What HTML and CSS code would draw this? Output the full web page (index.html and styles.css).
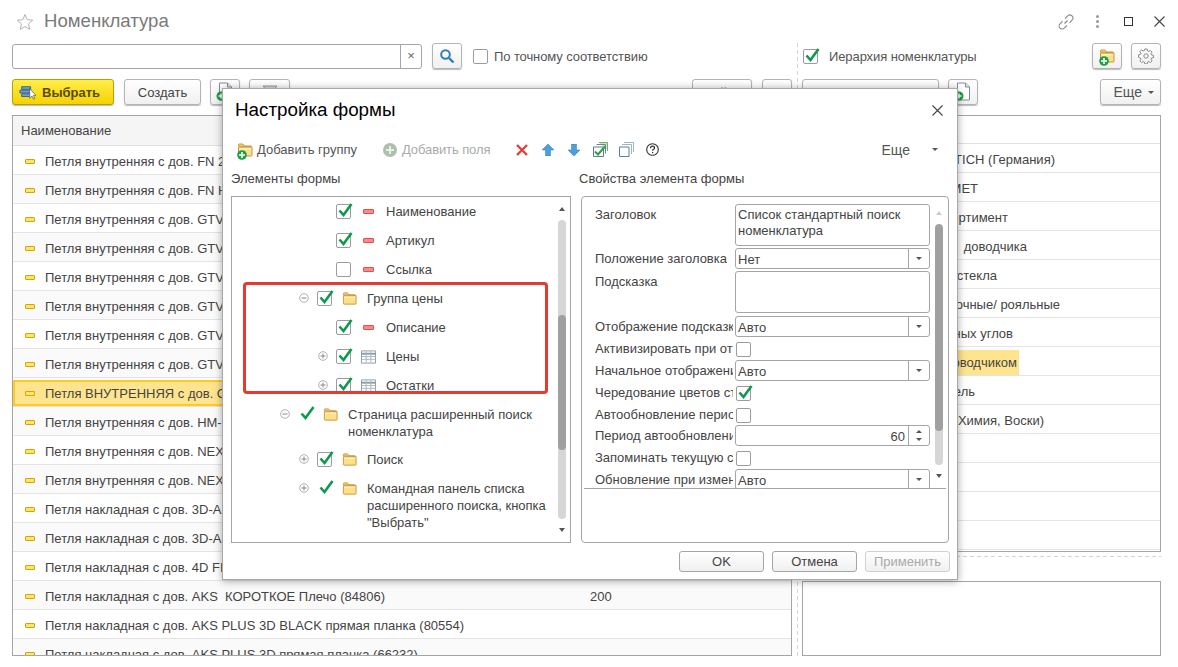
FILE: index.html
```html
<!DOCTYPE html>
<html lang="ru">

<head>
  <meta charset="UTF-8">
  <meta name="viewport" content="width=device-width, initial-scale=1.0">
  <title>Номенклатура</title>
  <link rel="stylesheet" href="styles.css">
</head>

<body>
  <svg class="sprites" width="0" height="0">
    <symbol id="i-tick" viewBox="0 0 16 16">
      <path d="M2.5 8.5 6.5 13 14.5 2" fill="none" stroke="#0b9a4b" stroke-width="2.6" />
    </symbol>
    <symbol id="i-folder" viewBox="0 0 16 16">
      <path d="M1.5 4V2.8q0-.8.8-.8h3.6l1.4 2h6.4q.8 0 .8.8V5z" fill="#f7d98a" stroke="#c9963a" />
      <path d="M1.5 5h13.5v8.2q0 .8-.8.8H2.3q-.8 0-.8-.8z" fill="#fbe08c" stroke="#c9963a" />
      <path d="M2.5 6h11.500v1.500H2.500z" fill="#fff2c0" />
    </symbol>
    <symbol id="i-plus" viewBox="0 0 10 10">
      <circle cx="5" cy="5" r="4.800" fill="#1e9e45" />
      <path d="M5 2v6M2 5h6" stroke="#fff" stroke-width="1.600" />
    </symbol>
    <symbol id="i-doc" viewBox="0 0 18 20">
      <path d="M3.500 1h8l4 4v13h-12z" fill="#fff" stroke="#7f8c97" />
      <path d="M11.500 1v4h4" fill="#dfe6ea" stroke="#7f8c97" />
      <circle cx="5" cy="14" r="4.500" fill="#1e9e45" />
      <path d="M5 11.500v5M2.500 14h5" stroke="#fff" stroke-width="1.500" />
    </symbol>
    <symbol id="i-table" viewBox="0 0 16 14">
      <path d="M.5.500h15v13H.5z" fill="#fff" stroke="#8b99a5" />
      <path d="M.5 3.500h15" stroke="#8b99a5" stroke-width="2" />
      <path d="M5.500 1v12M10.500 1v12M1 6.500h14M1 9.500h14" stroke="#aab5be" />
    </symbol>
    <symbol id="i-minus-round" viewBox="0 0 10 10">
      <circle cx="5" cy="5" r="4.300" fill="#fff" stroke="#b0b0b0" />
      <path d="M2.500 5h5" stroke="#888" />
    </symbol>
    <symbol id="i-plus-round" viewBox="0 0 10 10">
      <circle cx="5" cy="5" r="4.300" fill="#fff" stroke="#b0b0b0" />
      <path d="M2.500 5h5M5 2.500v5" stroke="#888" />
    </symbol>
  </svg>

  <div class="form-window">
    <header class="titlebar">
      <svg class="star" width="18" height="18" viewBox="0 0 18 18">
        <path d="M9 1.500 11.200 6.700 16.800 7.200 12.500 10.900 13.800 16.400 9 13.500 4.200 16.400 5.500 10.900 1.200 7.200 6.800 6.700z" fill="none" stroke="#b4b4b4" />
      </svg>
      <h1 class="titlebar__name">Номенклатура</h1>
      <div class="titlebar__actions">
        <svg width="16" height="16" viewBox="0 0 16 16">
          <path d="M6.500 9.500 9.500 6.500M7 4.500 9.700 1.900a3 3 0 0 1 4.300 4.300L11.500 8.800M9 11.500 6.300 14.100A3 3 0 0 1 2 9.800L4.500 7.200" fill="none" stroke="#8a8a8a" stroke-width="1.100" />
        </svg>
        <span class="dots"><i></i><i></i><i></i></span>
        <span class="win-max"></span>
        <svg width="11" height="11" viewBox="0 0 11 11">
          <path d="M.5.500l10 10M10.500.500l-10 10" stroke="#444" stroke-width="1.100" />
        </svg>
      </div>
    </header>

    <div class="panes">
      <section class="pane pane--list">
        <div class="filter-row">
          <div class="search-box">
            <span class="search-box__input"></span>
            <span class="search-box__clear">×</span>
          </div>
          <button class="btn btn--icon">
            <svg width="16" height="16" viewBox="0 0 16 16">
              <circle cx="6.500" cy="6.500" r="4.300" fill="none" stroke="#2f7fb5" stroke-width="2" />
              <path d="M10 10l4.500 4.500" stroke="#2f7fb5" stroke-width="2.400" />
            </svg>
          </button>
          <label class="check-label"><span class="check"></span>По точному соответствию</label>
        </div>

        <div class="tool-row">
          <button class="btn btn--primary">
            <svg width="17" height="17" viewBox="0 0 19 17">
              <path d="M3 2h10v3H3zM1 6h12v3H1zM3 10h10v3H3z" fill="#6d9fd0" stroke="#2f5c8c" />
              <path d="M12 4v11l2.500-2.500 1.800 3.500 1.500-.8-1.800-3.400H19z" fill="#fff" stroke="#444" stroke-width=".7" />
            </svg>
            Выбрать
          </button>
          <button class="btn btn--create">Создать</button>
          <button class="btn btn--icon"><svg width="18" height="20"><use href="#i-doc" /></svg></button>
          <button class="btn btn--filter">
            <svg width="16" height="14" viewBox="0 0 16 14">
              <path d="M1 1h14L10 7v6H6V7z" fill="#d7d7d7" stroke="#9a9a9a" />
            </svg>
          </button>
          <span class="tool-row__gap"></span>
          <button class="btn btn--find">Найти</button>
          <button class="btn btn--icon"></button>
        </div>

        <div class="grid">
          <div class="grid__head">Наименование</div>
          <div class="grid__row"><i class="mark"></i>Петля внутренняя с дов. FN 2D прямая планка</div>
          <div class="grid__row"><i class="mark"></i>Петля внутренняя с дов. FN HM прямая планка</div>
          <div class="grid__row"><i class="mark"></i>Петля внутренняя с дов. GTV 3D прямая планка</div>
          <div class="grid__row"><i class="mark"></i>Петля внутренняя с дов. GTV 2D прямая планка</div>
          <div class="grid__row"><i class="mark"></i>Петля внутренняя с дов. GTV 4D прямая планка</div>
          <div class="grid__row"><i class="mark"></i>Петля внутренняя с дов. GTV BLACK прямая планка</div>
          <div class="grid__row"><i class="mark"></i>Петля внутренняя с дов. GTV KOROTKOE прямая планка</div>
          <div class="grid__row"><i class="mark"></i>Петля внутренняя с дов. GTV PLUS прямая планка</div>
          <div class="grid__row is-current"><i class="mark"></i>Петля ВНУТРЕННЯЯ с дов. GTV прямая планка</div>
          <div class="grid__row"><i class="mark"></i>Петля внутренняя с дов. HM-3D прямая планка</div>
          <div class="grid__row"><i class="mark"></i>Петля внутренняя с дов. NEXIS прямая планка</div>
          <div class="grid__row"><i class="mark"></i>Петля внутренняя с дов. NEXIS BLACK прямая планка</div>
          <div class="grid__row"><i class="mark"></i>Петля накладная с дов. 3D-A прямая планка</div>
          <div class="grid__row"><i class="mark"></i>Петля накладная с дов. 3D-A BLACK прямая планка</div>
          <div class="grid__row"><i class="mark"></i>Петля накладная с дов. 4D FIX прямая планка</div>
          <div class="grid__row"><i class="mark"></i>Петля накладная с дов. AKS&nbsp; КОРОТКОЕ Плечо (84806)<span class="grid__qty">200</span></div>
          <div class="grid__row"><i class="mark"></i>Петля накладная с дов. AKS PLUS 3D BLACK прямая планка (80554)</div>
          <div class="grid__row"><i class="mark"></i>Петля накладная с дов. AKS PLUS 3D прямая планка (66232)</div>
        </div>
      </section>

      <div class="splitter"></div>

      <section class="pane pane--groups">
        <div class="filter-row">
          <label class="check-label check-label--hier">
            <span class="check"><svg class="tick" width="16" height="16"><use href="#i-tick" /></svg></span>
            Иерархия номенклатуры
          </label>
          <span class="tool-row__gap"></span>
          <button class="btn btn--icon">
            <span class="icon-stack">
              <svg width="16" height="16"><use href="#i-folder" /></svg>
              <svg class="icon-stack__plus" width="10" height="10"><use href="#i-plus" /></svg>
            </span>
          </button>
          <button class="btn btn--icon btn--gear">
            <svg width="16" height="16" viewBox="0 0 16 16">
              <path d="M6.800 1h2.400l.3 1.900 1.300.6 1.600-1.100 1.700 1.700-1.100 1.600.6 1.300 1.900.3v2.400l-1.900.3-.6 1.300 1.100 1.600-1.700 1.700-1.600-1.100-1.300.6-.3 1.900H6.800l-.3-1.900-1.300-.6-1.600 1.100-1.700-1.700 1.100-1.600-.6-1.300L.5 9.200V6.800l1.900-.3.6-1.300-1.100-1.600 1.700-1.700 1.600 1.100 1.300-.6z" fill="none" stroke="#8a8a8a" />
              <circle cx="8" cy="8" r="2.200" fill="none" stroke="#8a8a8a" />
            </svg>
          </button>
        </div>

        <div class="tool-row">
          <button class="btn btn--group">Создать группу</button>
          <button class="btn btn--icon"><svg width="18" height="20"><use href="#i-doc" /></svg></button>
          <span class="tool-row__gap"></span>
          <button class="btn btn--more">Еще<i class="caret"></i></button>
        </div>

        <div class="groups">
          <div class="groups__head">Номенклатура</div>
          <div class="groups__row end-1055">Фурнитура HETTICH (Германия)</div>
          <div class="groups__row end-978">Фурнитура МЕТ</div>
          <div class="groups__row end-1008">Фурнитура ассортимент</div>
          <div class="groups__row end-1027">Петли без&nbsp;&nbsp;доводчика</div>
          <div class="groups__row end-997">Петли для стекла</div>
          <div class="groups__row end-1060">Петли угловочные/ рояльные</div>
          <div class="groups__row end-1013">Петли для нестандартных углов</div>
          <div class="groups__row end-1019"><span class="groups__current">Петли с доводчиком</span></div>
          <div class="groups__row end-975">Петли и мебель</div>
          <div class="groups__row end-1044">Прочее (Химия, Воски)</div>
          <div class="groups__row"></div>
          <div class="groups__row"></div>
          <div class="groups__row"></div>
          <div class="groups__row"></div>
        </div>

        <div class="h-split"></div>
        <div class="preview"></div>
      </section>
    </div>
  </div>

  <!-- окно настройки поверх формы -->
  <div class="dialog">
    <div class="dialog__title">
      Настройка формы
      <svg width="11" height="11" viewBox="0 0 11 11">
        <path d="M.5.500l10 10M10.500.500l-10 10" stroke="#444" stroke-width="1.100" />
      </svg>
    </div>

    <div class="dialog__tools">
      <span class="tool tool--group">
        <span class="icon-stack">
          <svg width="16" height="16"><use href="#i-folder" /></svg>
          <svg class="icon-stack__plus" width="10" height="10"><use href="#i-plus" /></svg>
        </span>
        Добавить группу
      </span>
      <span class="tool tool--off">
        <svg width="14" height="14" viewBox="0 0 14 14">
          <circle cx="7" cy="7" r="7" fill="#aebfae" />
          <path d="M7 3v8M3 7h8" stroke="#e8eee8" stroke-width="2" />
        </svg>
        Добавить поля
      </span>
      <svg class="tool-ico tool-ico--del" width="12" height="12" viewBox="0 0 12 12">
        <path d="M1 1l10 10M11 1 1 11" stroke="#e2403a" stroke-width="2.400" />
      </svg>
      <svg class="tool-ico tool-ico--arrow" width="12" height="12" viewBox="0 0 12 12">
        <path d="M6 0l6 6H8.500v6h-5V6H0z" fill="#4a9fdc" stroke="#2f7fb5" stroke-width=".5" />
      </svg>
      <svg class="tool-ico tool-ico--arrow" width="12" height="12" viewBox="0 0 12 12">
        <path d="M6 12 0 6h3.500V0h5v6H12z" fill="#4a9fdc" stroke="#2f7fb5" stroke-width=".5" />
      </svg>
      <svg class="tool-ico tool-ico--copy" width="15" height="15" viewBox="0 0 15 15">
        <path d="M6 .500h8.500V9" fill="#cfe3cf" stroke="#7fa37f" />
        <path d="M3.500 2.500h9v9" fill="none" stroke="#5f8f7f" />
        <path d="M.5 5h10v9.500H.5z" fill="#fff" stroke="#5c7f99" />
        <path d="M2 9.500l3 3 7-8" fill="none" stroke="#2f9e3f" stroke-width="2" />
      </svg>
      <svg class="tool-ico tool-ico--copy2" width="15" height="15" viewBox="0 0 15 15">
        <path d="M5 .500h9.500V10M3 2.500h9.500V12" fill="none" stroke="#9fb3c2" />
        <path d="M.5 5h9.500v9.500H.5z" fill="#fff" stroke="#5c7f99" />
      </svg>
      <svg class="tool-ico" width="13" height="13" viewBox="0 0 13 13">
        <circle cx="6.500" cy="6.500" r="5.800" fill="none" stroke="#333" stroke-width="1.100" />
        <path d="M4.500 5.200q0-2 2-2t2 1.700q0 1-1.200 1.600-.8.500-.8 1.300" fill="none" stroke="#333" stroke-width="1.200" />
        <path d="M6 9h1.200v1.200H6z" fill="#333" />
      </svg>
      <span class="tool-row__gap"></span>
      <span class="tool tool--more">Еще<i class="caret"></i></span>
    </div>

    <div class="dialog__columns">
      <div class="dialog__col dialog__col--tree">
        <div class="dialog__caption">Элементы формы</div>
        <div class="tree">
          <div class="tree__list">
            <div class="tree-row lvl-3">
              <span class="expander"></span>
              <span class="check"><svg class="tick" width="16" height="16"><use href="#i-tick" /></svg></span>
              <span class="tree-row__ico"><i class="dash"></i></span>
              <span>Наименование</span>
            </div>
            <div class="tree-row lvl-3">
              <span class="expander"></span>
              <span class="check"><svg class="tick" width="16" height="16"><use href="#i-tick" /></svg></span>
              <span class="tree-row__ico"><i class="dash"></i></span>
              <span>Артикул</span>
            </div>
            <div class="tree-row lvl-3">
              <span class="expander"></span>
              <span class="check"></span>
              <span class="tree-row__ico"><i class="dash"></i></span>
              <span>Ссылка</span>
            </div>
            <div class="tree-row lvl-2">
              <svg class="expander" width="10" height="10"><use href="#i-minus-round" /></svg>
              <span class="check"><svg class="tick" width="16" height="16"><use href="#i-tick" /></svg></span>
              <span class="tree-row__ico"><svg width="15" height="15"><use href="#i-folder" /></svg></span>
              <span>Группа цены</span>
            </div>
            <div class="tree-row lvl-3">
              <span class="expander"></span>
              <span class="check"><svg class="tick" width="16" height="16"><use href="#i-tick" /></svg></span>
              <span class="tree-row__ico"><i class="dash"></i></span>
              <span>Описание</span>
            </div>
            <div class="tree-row lvl-3">
              <svg class="expander" width="10" height="10"><use href="#i-plus-round" /></svg>
              <span class="check"><svg class="tick" width="16" height="16"><use href="#i-tick" /></svg></span>
              <span class="tree-row__ico"><svg width="15" height="14"><use href="#i-table" /></svg></span>
              <span>Цены</span>
            </div>
            <div class="tree-row lvl-3">
              <svg class="expander" width="10" height="10"><use href="#i-plus-round" /></svg>
              <span class="check"><svg class="tick" width="16" height="16"><use href="#i-tick" /></svg></span>
              <span class="tree-row__ico"><svg width="15" height="14"><use href="#i-table" /></svg></span>
              <span>Остатки</span>
            </div>
            <div class="tree-row tree-row--wrap lvl-1">
              <svg class="expander" width="10" height="10"><use href="#i-minus-round" /></svg>
              <span class="check check--bare"><svg class="tick" width="16" height="16"><use href="#i-tick" /></svg></span>
              <span class="tree-row__ico"><svg width="15" height="15"><use href="#i-folder" /></svg></span>
              <span>Страница расширенный поиск<br>номенклатура</span>
            </div>
            <div class="tree-row lvl-2">
              <svg class="expander" width="10" height="10"><use href="#i-plus-round" /></svg>
              <span class="check"><svg class="tick" width="16" height="16"><use href="#i-tick" /></svg></span>
              <span class="tree-row__ico"><svg width="15" height="15"><use href="#i-folder" /></svg></span>
              <span>Поиск</span>
            </div>
            <div class="tree-row lvl-2">
              <svg class="expander" width="10" height="10"><use href="#i-plus-round" /></svg>
              <span class="check check--bare"><svg class="tick" width="16" height="16"><use href="#i-tick" /></svg></span>
              <span class="tree-row__ico"><svg width="15" height="15"><use href="#i-folder" /></svg></span>
              <span>Командная панель списка<br>расширенного поиска, кнопка<br>"Выбрать"</span>
            </div>
            <div class="tree-row lvl-2">
              <span class="expander"></span>
              <span class="check check--bare"><svg class="tick" width="16" height="16"><use href="#i-tick" /></svg></span>
            </div>
          </div>
          <div class="scroll scroll--tree">
            <i class="scroll__up"></i>
            <div class="scroll__track"><div class="scroll__thumb"></div></div>
            <i class="scroll__down"></i>
          </div>
        </div>
      </div>

      <div class="dialog__col dialog__col--props">
        <div class="dialog__caption">Свойства элемента формы</div>
        <div class="props">
          <div class="props__sheet">
            <div class="props__rows">
              <div class="prop prop--tall">
                <span class="prop__label">Заголовок</span>
                <span class="memo">Список стандартный поиск номенклатура</span>
              </div>
              <div class="prop prop--select">
                <span class="prop__label">Положение заголовка</span>
                <span class="field">Нет<i class="field__btn"><i class="caret"></i></i></span>
              </div>
              <div class="prop prop--tall">
                <span class="prop__label">Подсказка</span>
                <span class="memo"></span>
              </div>
              <div class="prop">
                <span class="prop__label">Отображение подсказки</span>
                <span class="field">Авто<i class="field__btn"><i class="caret"></i></i></span>
              </div>
              <div class="prop">
                <span class="prop__label">Активизировать при открытии</span>
                <span class="check"></span>
              </div>
              <div class="prop">
                <span class="prop__label">Начальное отображение</span>
                <span class="field">Авто<i class="field__btn"><i class="caret"></i></i></span>
              </div>
              <div class="prop">
                <span class="prop__label">Чередование цветов строк</span>
                <span class="check"><svg class="tick" width="16" height="16"><use href="#i-tick" /></svg></span>
              </div>
              <div class="prop prop--short">
                <span class="prop__label">Автообновление периодически</span>
                <span class="check"></span>
              </div>
              <div class="prop">
                <span class="prop__label">Период автообновления</span>
                <span class="field field--num">60<i class="field__spin"><i class="caret caret--up"></i><i class="caret"></i></i></span>
              </div>
              <div class="prop">
                <span class="prop__label">Запоминать текущую строку</span>
                <span class="check"></span>
              </div>
              <div class="prop">
                <span class="prop__label">Обновление при изменении</span>
                <span class="field">Авто<i class="field__btn"><i class="caret"></i></i></span>
              </div>
            </div>
            <div class="scroll scroll--props">
              <i class="scroll__up scroll__up--off"></i>
              <div class="scroll__track"><div class="scroll__thumb"></div></div>
              <i class="scroll__down"></i>
            </div>
          </div>
        </div>
      </div>
    </div>

    <div class="dialog__footer">
      <button class="btn btn--foot">OK</button>
      <button class="btn btn--foot">Отмена</button>
      <button class="btn btn--foot btn--off">Применить</button>
    </div>

    <div class="highlight"></div>
  </div>
</body>

</html>
```

FILE: styles.css
```css
* {
  box-sizing: border-box;
}

body {
  margin: 0;
  width: 1178px;
  height: 667px;
  overflow: hidden;
  position: relative;
  background: #fff;
  font-family: "Liberation Sans", Arial, sans-serif;
  font-size: 13px;
  color: #444;
}

.sprites {
  position: absolute;
}

.form-window {
  padding: 0 17px 0 12px;
}

/* title */
.titlebar {
  height: 43px;
  display: flex;
  align-items: center;
}

.star {
  margin: 0 10px 0 4px;
}

.titlebar__name {
  margin: 0 0 2px;
  font-size: 18.6px;
  font-weight: 400;
  color: #7a7a7a;
}

.titlebar__actions {
  margin-left: auto;
  margin-right: -4px;
  display: flex;
  align-items: center;
}

.dots {
  display: flex;
  flex-direction: column;
  gap: 2px;
  margin: 0 25px 0 22px;
}

.dots i {
  width: 3px;
  height: 3px;
  background: #999;
  border-radius: 50%;
}

.win-max {
  width: 9px;
  height: 9px;
  border: 1px solid #333;
  margin-right: 21px;
}

/* panes */
.panes {
  display: flex;
}

.pane--list {
  width: 780px;
}

.pane--groups {
  width: 359px;
}

.splitter {
  width: 10px;
  height: 613px;
  background: repeating-linear-gradient(#d4d4d4 0 4px, transparent 4px 7px) 5px 0 / 1px 100% no-repeat;
}

.filter-row {
  height: 26px;
  display: flex;
  align-items: center;
  margin-bottom: 10px;
}

.tool-row {
  height: 26px;
  display: flex;
  align-items: center;
  margin-bottom: 10px;
}

.tool-row__gap {
  flex: 1;
}

.search-box {
  width: 410px;
  height: 25px;
  display: flex;
  border: 1px solid #a5a5a5;
  border-radius: 3px;
  margin-right: 10px;
  background: #fff;
}

.search-box__input {
  flex: 1;
}

.search-box__clear {
  width: 21px;
  border-left: 1px solid #a5a5a5;
  text-align: center;
  line-height: 22px;
  font-size: 13px;
  color: #666;
}

/* buttons */
.btn {
  height: 26px;
  padding: 0;
  display: inline-flex;
  align-items: center;
  justify-content: center;
  font: inherit;
  color: #444;
  background: linear-gradient(#fff, #f0f0f0);
  border: 1px solid #b4b4b4;
  border-radius: 3px;
  box-shadow: 0 1px 1px #bbb;
}

.btn--icon {
  width: 30px;
}

.btn--primary {
  width: 102px;
  justify-content: flex-start;
  padding-left: 6px;
  gap: 6px;
  font-weight: 700;
  color: #5a4b00;
  background: linear-gradient(#ffee4a, #f6d200);
  border-color: #b8a000;
  margin-right: 10px;
}

.btn--create {
  width: 77px;
  margin-right: 9px;
}

.btn--filter {
  width: 41px;
  margin-left: 9px;
}

.btn--find {
  width: 60px;
  margin-right: 10px;
}

.btn--group {
  width: 137px;
  margin-right: 9px;
}

.btn--more {
  width: 61px;
  justify-content: flex-end;
  padding-right: 6px;
  gap: 6px;
  font-size: 14px;
  color: #555;
}

.btn--gear {
  margin-left: 9px;
}

.check-label {
  display: flex;
  align-items: center;
  gap: 6px;
  margin-left: 11px;
  color: #555;
  letter-spacing: -.1px;
}

.check-label--hier {
  margin-left: 1px;
  gap: 11px;
}

.check {
  width: 15px;
  height: 15px;
  flex: none;
  position: relative;
  display: inline-block;
  background: #fff;
  border: 1px solid #9c9c9c;
  border-radius: 2px;
}

.check--bare {
  border-color: transparent;
  background: none;
}

.tick {
  position: absolute;
  left: 0;
  top: -3px;
}

.caret {
  display: inline-block;
  width: 0;
  height: 0;
  border: 3px solid transparent;
  border-top: 3px solid #555;
  border-bottom: 0;
}

.caret--up {
  border-top: 0;
  border-bottom: 3px solid #555;
}

.icon-stack {
  position: relative;
  display: inline-flex;
}

.icon-stack__plus {
  position: absolute;
  left: 0;
  bottom: -2px;
}

/* main list */
.grid {
  height: 541px;
  overflow: hidden;
  border: 1px solid #a5a5a5;
}

.grid__head {
  height: 30px;
  padding-left: 8px;
  line-height: 30px;
  background: #f5f5f5;
  border-bottom: 1px solid #e0e0e0;
}

.grid__row {
  height: 29px;
  display: flex;
  align-items: center;
  white-space: pre;
  padding: 2px 0 0 12px;
  background: #fff;
  border-bottom: 1px solid #e4e4e4;
}

.grid__row:nth-child(odd) {
  background: #fafafa;
}

.grid__row.is-current {
  padding-top: 0;
  background: #fee48f;
  background-clip: padding-box;
  border-top: 2px solid transparent;
  box-shadow: inset 0 0 0 2px #ffcb20;
}

.mark {
  width: 10px;
  height: 5px;
  margin-right: 10px;
  background: #ffe566;
  border: 1px solid #cfa60c;
  border-radius: 1px;
}

.grid__qty {
  position: absolute;
  left: 590px;
}

/* right tree */
.groups {
  height: 437px;
  overflow: hidden;
  border: 1px solid #a5a5a5;
}

.groups__head {
  height: 28px;
  padding-left: 60px;
  line-height: 28px;
  border-bottom: 1px solid #e0e0e0;
}

.groups__row {
  height: 29px;
  display: flex;
  align-items: center;
  justify-content: flex-end;
  white-space: nowrap;
  padding-top: 2px;
  border-bottom: 1px solid #e4e4e4;
}

.end-975 { padding-right: 185px; }
.end-978 { padding-right: 182px; }
.end-997 { padding-right: 163px; }
.end-1008 { padding-right: 152px; }
.end-1013 { padding-right: 147px; }
.end-1019 { padding-right: 141px; }
.end-1027 { padding-right: 133px; }
.end-1044 { padding-right: 116px; }
.end-1055 { padding-right: 105px; }
.end-1060 { padding-right: 100px; }

.groups__current {
  background: #fee48f;
  padding: 5px 2px 5px 0;
}

.h-split {
  height: 29px;
  background: repeating-linear-gradient(90deg, #d4d4d4 0 4px, transparent 4px 7px) 0 4px / 100% 1px no-repeat;
}

.preview {
  height: 75px;
  border: 1px solid #a5a5a5;
}

/* dialog */
.dialog {
  position: absolute;
  left: 222px;
  top: 88px;
  width: 736px;
  height: 492px;
  background: #fff;
  border: 1px solid #a8a8a8;
  box-shadow: 0 1px 8px rgba(0, 0, 0, .35);
}

.dialog__title {
  height: 42px;
  padding: 0 14px 0 12px;
  display: flex;
  align-items: center;
  justify-content: space-between;
  font-size: 18.8px;
  color: #000;
}

.dialog__tools {
  height: 37px;
  padding: 0 19px 0 14px;
  display: flex;
  align-items: center;
}

.tool {
  display: inline-flex;
  align-items: center;
  gap: 4px;
  color: #555;
}

.tool--group {
  margin-right: 26px;
}

.tool--off {
  gap: 5px;
  color: #aaa;
  letter-spacing: -.1px;
  margin-right: 26px;
}

.tool-ico {
  margin-right: 14px;
  flex: none;
}

.tool-ico--arrow {
  margin-right: 14px;
}

.tool-ico--copy {
  margin-left: -1px;
  margin-right: 11px;
}

.tool-ico--copy2 {
  margin-right: 12px;
}

.tool--more {
  gap: 22px;
  font-size: 14px;
}

.dialog__columns {
  display: flex;
  padding-left: 8px;
}

.dialog__col--tree {
  width: 340px;
  margin-right: 8px;
}

.dialog__col--props {
  width: 371px;
}

.dialog__caption {
  height: 28px;
  padding-top: 1px;
  line-height: 20px;
}

.tree {
  position: relative;
  height: 347px;
  overflow: hidden;
  border: 1px solid #a5a5a5;
}

.tree-row {
  display: flex;
  align-items: flex-start;
  padding-top: 6px;
  padding-bottom: 6px;
  line-height: 17px;
}

.tree-row--wrap {
  padding-bottom: 5px;
}

.lvl-1 { padding-left: 48px; }
.lvl-2 { padding-left: 67px; }
.lvl-3 { padding-left: 86px; }

.expander {
  width: 10px;
  height: 10px;
  flex: none;
  margin: 3px 8px 0 0;
}

.tree-row .check {
  margin: 1px 10px 0 0;
}

.tree-row__ico {
  width: 25px;
  height: 17px;
  flex: none;
  display: flex;
  align-items: center;
}

.dash {
  width: 11px;
  height: 5px;
  margin-left: 2px;
  background: #f88;
  border: 1px solid #d9534f;
  border-radius: 1px;
}

/* scrollbars */
.scroll {
  position: absolute;
  display: flex;
  flex-direction: column;
  align-items: center;
}

.scroll--tree {
  right: 3px;
  top: 10px;
  width: 10px;
  height: 325px;
}

.scroll--props {
  right: 2px;
  top: 14px;
  width: 10px;
  height: 267px;
}

.scroll__up,
.scroll__down {
  width: 0;
  height: 0;
  flex: none;
  border: 3px solid transparent;
}

.scroll__up {
  border-top: 0;
  border-bottom: 4px solid #555;
  margin-bottom: 9px;
}

.scroll__up--off {
  border-bottom-color: #ccc;
}

.scroll__down {
  border-bottom: 0;
  border-top: 4px solid #555;
  margin-top: 9px;
}

.scroll__track {
  width: 8px;
  flex: 1;
  background: #d6d6d6;
  border-radius: 4px;
  overflow: hidden;
}

.scroll__thumb {
  background: #a0a0a0;
  border-radius: 4px;
}

.scroll--tree .scroll__thumb {
  height: 135px;
  margin-top: 95px;
}

.scroll--props .scroll__thumb {
  height: 207px;
}

/* properties */
.props {
  width: 368px;
  height: 347px;
  margin-left: 2px;
  border: 1px solid #a5a5a5;
  border-radius: 4px;
  padding: 0 2px;
}

.props__sheet {
  position: relative;
  height: 292px;
  padding: 7px 0 0 11px;
  overflow: hidden;
  border-bottom: 1px solid #a5a5a5;
}

.prop {
  height: 22px;
  display: flex;
  align-items: flex-start;
}

.prop--select {
  height: 23px;
}

.prop--short {
  height: 21px;
}

.prop--tall {
  height: 44px;
}

.prop--tall + .prop--select + .prop--tall {
  height: 45px;
}

.prop__label {
  width: 138px;
  flex: none;
  margin-right: 2px;
  padding-top: 3px;
  overflow: hidden;
  white-space: nowrap;
}

.prop .check {
  margin: 4px 0 0 1px;
}

.memo {
  width: 195px;
  height: 42px;
  padding: 2px 2px;
  line-height: 16px;
  border: 1px solid #a5a5a5;
  border-radius: 3px;
  color: #444;
}

.field {
  width: 195px;
  height: 21px;
  display: flex;
  align-items: center;
  padding: 1px 0 0 2px;
  position: relative;
  border: 1px solid #a5a5a5;
  border-radius: 3px;
}

.field__btn {
  margin: -1px 0 0 auto;
  width: 21px;
  height: 20px;
  display: flex;
  align-items: center;
  justify-content: center;
  border-left: 1px solid #a5a5a5;
}

.field--num {
  justify-content: flex-end;
  padding-left: 0;
}

.field__spin {
  width: 21px;
  height: 20px;
  margin: -1px 0 0 3px;
  display: flex;
  flex-direction: column;
  align-items: center;
  justify-content: space-evenly;
  border-left: 1px solid #a5a5a5;
}

/* dialog bottom */
.dialog__footer {
  display: flex;
  justify-content: flex-end;
  gap: 8px;
  padding: 8px 7px 0 0;
}

.btn--foot {
  width: 85px;
  height: 21px;
  box-shadow: none;
  border-color: #a5a5a5;
}

.btn--off {
  color: #aaa;
  border-color: #d0d0d0;
}

.highlight {
  position: absolute;
  left: 20px;
  top: 193px;
  width: 305px;
  height: 112px;
  border: 3px solid #e53a30;
  border-radius: 4px;
}
```
